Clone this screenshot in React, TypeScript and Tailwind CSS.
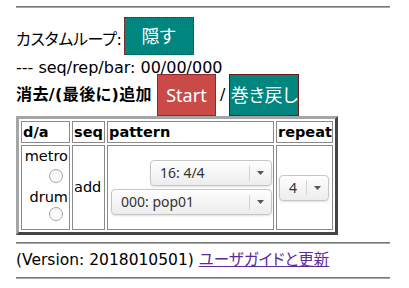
type SelectProps = {
  label: string;
  className?: string;
};

/** jQuery Mobile 風のセレクト */
function FakeSelect({ label, className }: SelectProps) {
  return (
    <div
      className={`flex h-[26px] items-center rounded-[4px] border border-[#c6c6c6] bg-gradient-to-b from-[#fefefe] to-[#ededed] text-[14px] text-[#333] shadow-[0_1px_2px_rgba(0,0,0,0.12)] ${className ?? ''}`}
      style={{ fontFamily: '"Noto Sans", sans-serif' }}
    >
      <span className="flex-1 whitespace-nowrap pl-[9px] leading-[16px]">{label}</span>
      <span className="h-[15px] w-px bg-[#d2d2d2]" />
      <span className="flex w-[21px] items-center justify-center">
        <svg width="7" height="4" viewBox="0 0 7 4">
          <path d="M0 0h7L3.5 4z" fill="#555" />
        </svg>
      </span>
    </div>
  );
}

function Radio() {
  return (
    <span className="block h-[14px] w-[14px] rounded-full border border-[#a3a3a3] bg-gradient-to-b from-[#f4f4f4] to-white" />
  );
}

export default function App() {
  const font = {
    fontFamily: '"DejaVu Sans", "Noto Sans CJK JP", sans-serif',
    fontFeatureSettings: '"palt"',
  };
  const btnFont = {
    fontFamily: '"Noto Sans", "Noto Sans CJK JP", sans-serif',
    fontFeatureSettings: '"palt"',
  };

  return (
    <div className="h-[288px] w-[409px] bg-white px-4 text-[16px] text-black" style={font}>
      {/* 上の線 */}
      <div className="pt-[6px]">
        <div className="h-[2px] w-[374px] border-t border-b border-t-[#7a7a7a] border-b-[#a8a8a8]" />
      </div>

      {/* カスタムループ */}
      <div className="mt-[9px] flex items-end">
        <span className="mb-[5px] leading-[20px] tracking-[-0.3px]">カスタムループ:</span>
        <button
          className="ml-[2px] h-[38px] w-[70px] whitespace-nowrap border border-dotted border-[#6b1a1a] bg-[#00857f] text-[18px] text-white"
          style={btnFont}
        >
          隠す
        </button>
      </div>

      <div className="mt-[3px] leading-[20px]">--- seq/rep/bar: 00/00/000</div>

      {/* 消去/追加 */}
      <div className="-mt-[4px] flex items-center">
        <span className="font-bold tracking-[0.4px]">消去/(最後に)追加</span>
        <button
          className="ml-[5px] h-[42px] w-[59px] whitespace-nowrap border border-[#8a2a2a] bg-[#c94a47] text-[18px] text-white"
          style={btnFont}
        >
          Start
        </button>
        <span className="mx-[4px]">/</span>
        <button
          className="h-[42px] w-[70px] whitespace-nowrap border border-[#6b1a1a] bg-[#00857f] text-[18px] text-white"
          style={btnFont}
        >
          巻き戻し
        </button>
      </div>

      {/* テーブル */}
      <table className="w-[322px] table-fixed border-separate border-spacing-[2px] border-[3px] border-t-[#a6a6a6] border-l-[#a6a6a6] border-r-[#444] border-b-[#444] text-[14.5px]">
        <thead>
          <tr className="h-[22px]">
            <th className="w-[49px] border border-[#8a8a8a] px-[1px] text-left font-bold leading-[18px]">d/a</th>
            <th className="w-[33px] border border-[#8a8a8a] px-[1px] text-left font-bold leading-[18px]">seq</th>
            <th className="w-[167px] border border-[#8a8a8a] px-[1px] text-left font-bold leading-[18px]">pattern</th>
            <th className="w-[57px] border border-[#8a8a8a] px-[1px] text-left font-bold leading-[18px]">repeat</th>
          </tr>
        </thead>
        <tbody>
          <tr className="h-[85px]">
            <td className="border border-[#8a8a8a] px-[1px] pt-[2px] align-top">
              <div className="flex flex-col items-end leading-[17px]">
                <span>metro</span>
                <span className="mt-[4px] mr-[5px]"><Radio /></span>
                <span className="mt-[6px]">drum</span>
                <span className="mt-[1px] mr-[5px]"><Radio /></span>
              </div>
            </td>
            <td className="border border-[#8a8a8a] px-[1px] align-middle">add</td>
            <td className="border border-[#8a8a8a] px-[1px] align-middle">
              <div className="flex flex-col items-end gap-[3px]">
                <FakeSelect label="16: 4/4" className="w-[122px]" />
                <FakeSelect label="000: pop01" className="w-[161px]" />
              </div>
            </td>
            <td className="border border-[#8a8a8a] px-[2px] align-middle">
              <FakeSelect label="4" className="w-[50px]" />
            </td>
          </tr>
        </tbody>
      </table>

      {/* フッター */}
      <div className="mt-[7px] h-[2px] w-[374px] border-t border-b border-t-[#7a7a7a] border-b-[#a8a8a8]" />
      <div className="pt-[9px] pb-[10px] text-[15.5px] leading-[14px]">
        (Version: 2018010501){' '}
        <a href="#" className="text-[#5b2a9b] underline">ユーザガイドと更新</a>
      </div>
      <div className="h-[2px] w-[374px] border-t border-b border-t-[#7a7a7a] border-b-[#a8a8a8]" />
    </div>
  );
}
